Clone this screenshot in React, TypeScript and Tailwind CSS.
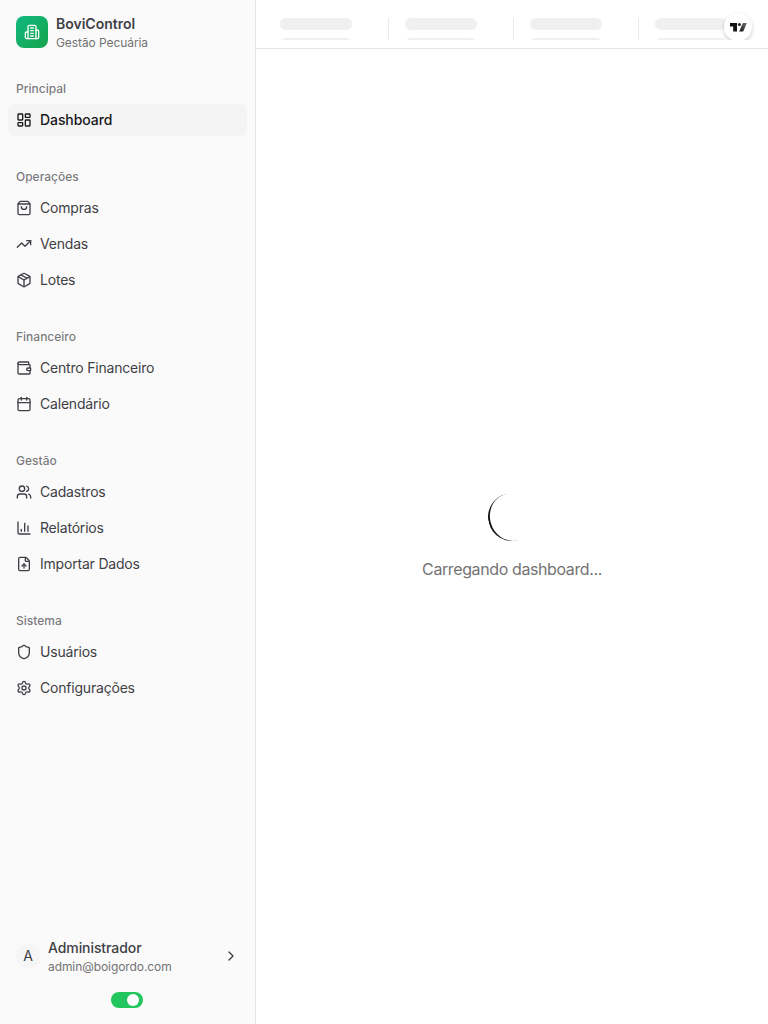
import type { ComponentType } from "react";
import {
  LayoutDashboard, ShoppingBag, TrendingUp, Package, Wallet, Calendar,
  Users, ChartColumn, FileUp, Shield, Settings, ChevronRight,
} from "lucide-react";

type Item = { label: string; icon: ComponentType<{ className?: string }>; active?: boolean };

const groups: { title: string; items: Item[] }[] = [
  { title: "Principal", items: [{ label: "Dashboard", icon: LayoutDashboard, active: true }] },
  {
    title: "Operações",
    items: [
      { label: "Compras", icon: ShoppingBag },
      { label: "Vendas", icon: TrendingUp },
      { label: "Lotes", icon: Package },
    ],
  },
  {
    title: "Financeiro",
    items: [
      { label: "Centro Financeiro", icon: Wallet },
      { label: "Calendário", icon: Calendar },
    ],
  },
  {
    title: "Gestão",
    items: [
      { label: "Cadastros", icon: Users },
      { label: "Relatórios", icon: ChartColumn },
      { label: "Importar Dados", icon: FileUp },
    ],
  },
  {
    title: "Sistema",
    items: [
      { label: "Usuários", icon: Shield },
      { label: "Configurações", icon: Settings },
    ],
  },
];

function BuildingIcon() {
  return (
    <svg
      className="size-4"
      viewBox="0 0 24 24"
      fill="none"
      stroke="currentColor"
      strokeWidth="2"
      strokeLinecap="round"
      strokeLinejoin="round"
    >
      <path d="M6 22V4a2 2 0 0 1 2-2h8a2 2 0 0 1 2 2v18Z" />
      <path d="M6 12H4a2 2 0 0 0-2 2v6a2 2 0 0 0 2 2h2" />
      <path d="M18 9h2a2 2 0 0 1 2 2v9a2 2 0 0 1-2 2h-2" />
      <path d="M10 6h4M10 10h4M10 14h4M10 18h4" />
    </svg>
  );
}

function NavGroup({ title, items }: { title: string; items: Item[] }) {
  return (
    <section className="p-2">
      <h2 className="flex h-8 items-center px-2 pt-0.5 text-xs font-medium text-[#3f3f46]/70">{title}</h2>
      <ul className="flex flex-col gap-1">
        {items.map(({ label, icon: Icon, active }) => (
          <li key={label}>
            <a
              className={
                active
                  ? "flex h-8 items-center gap-2 rounded-md bg-[#f4f4f4] px-2 text-sm font-medium tracking-[-0.08px] text-[#18181b]"
                  : "flex h-8 items-center gap-2 rounded-md px-2 text-sm tracking-[-0.2px] text-[#3f3f46]"
              }
            >
              <Icon className="size-4 shrink-0" />
              <span>{label}</span>
            </a>
          </li>
        ))}
      </ul>
    </section>
  );
}

function Sidebar() {
  return (
    <aside className="flex w-64 shrink-0 flex-col border-r border-[#e5e5e5] bg-[#fafafa] text-[#3f3f46]">
      <header className="flex h-16 items-center gap-2 px-4">
        <div className="flex size-8 items-center justify-center rounded-lg bg-linear-to-br from-[#10b981] to-[#16a34a] text-white">
          <BuildingIcon />
        </div>
        <div className="grid gap-0.5 pt-0.5 text-sm leading-tight">
          <span className="font-semibold">BoviControl</span>
          <span className="text-xs tracking-[-0.08px] text-[#737373]">Gestão Pecuária</span>
        </div>
      </header>
      <nav className="flex flex-1 flex-col gap-2">
        {groups.map((g) => (
          <NavGroup key={g.title} {...g} />
        ))}
      </nav>
      <footer className="flex flex-col p-2">
        <div className="flex h-12 items-center gap-2 px-2">
          <div className="flex size-6 items-center justify-center rounded-full bg-[#f5f5f5] text-sm">A</div>
          <div className="grid flex-1 gap-0.5 pt-0.5 text-sm leading-tight">
            <span className="font-medium tracking-[-0.08px]">Administrador</span>
            <span className="text-xs tracking-[-0.08px] text-[#737373]">admin@boigordo.com</span>
          </div>
          <ChevronRight className="size-4" />
        </div>
        <div className="flex justify-center pt-3 pr-px pb-2">
          <div className="flex h-4 w-8 items-center justify-end rounded-full bg-[#22c55e] px-1">
            <div className="size-3 rounded-full bg-white" />
          </div>
        </div>
      </footer>
    </aside>
  );
}

function TickerTape() {
  return (
    <div className="relative ml-2 flex h-10 overflow-hidden pt-[18px]">
      {[0, 1, 2, 3].map((i) => (
        <div
          key={i}
          className={
            i < 3
              ? "flex w-[125px] shrink-0 flex-col gap-2 border-r border-[#ebebeb] pl-4"
              : "flex w-[125px] shrink-0 flex-col gap-2 pl-4"
          }
        >
          <div className="h-3 w-[72px] shrink-0 rounded-full bg-[#f0f0f0]" />
          <div className="h-3 w-[72px] shrink-0 rounded-full bg-[#f0f0f0]" />
        </div>
      ))}
      <div className="absolute top-[13px] left-[460px] flex size-7 items-center justify-center rounded-full bg-white shadow-[0_2px_4px_rgba(0,0,0,0.2)]">
        <svg width="18" height="10" viewBox="0 0 18 10">
          <defs>
            <linearGradient id="slash" x1="0" y1="1" x2="1" y2="0">
              <stop offset="0" stopColor="#111" />
              <stop offset="1" stopColor="#777" />
            </linearGradient>
          </defs>
          <path d="M1 1h7v8.5H4.2V4.6H1z" fill="#131313" />
          <circle cx="10.4" cy="2.5" r="1.5" fill="#222" />
          <path d="M13.9 1h4l-3.7 8.5h-4z" fill="url(#slash)" />
        </svg>
      </div>
    </div>
  );
}

export default function App() {
  return (
    <div className="flex h-screen w-full overflow-hidden bg-white font-['Inter',sans-serif]">
      <Sidebar />
      <main className="flex min-w-0 flex-1 flex-col">
        <div className="h-[49px] shrink-0 border-b border-[#e5e5e5]">
          <TickerTape />
        </div>
        <div className="flex flex-1 flex-col items-center justify-center gap-4">
          <div className="size-12 rotate-[76deg] rounded-full border-b-2 border-[#171717]" />
          <p className="text-base tracking-[-0.39px] text-[#737373]">Carregando dashboard...</p>
        </div>
      </main>
    </div>
  );
}
